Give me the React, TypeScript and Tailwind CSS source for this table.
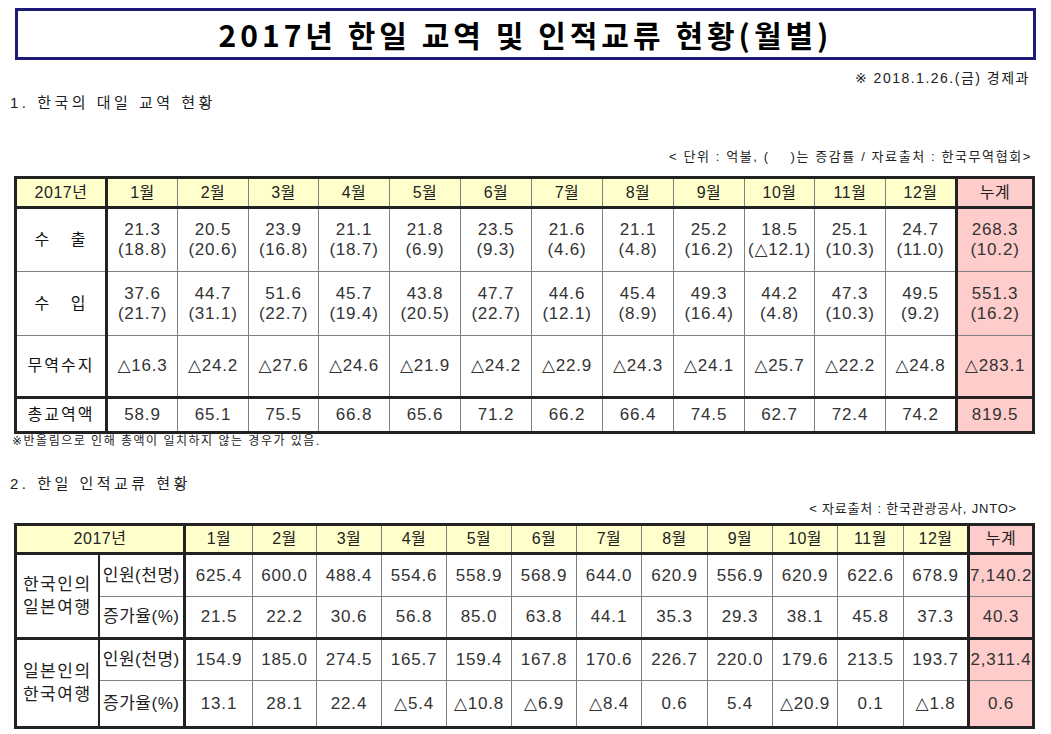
import React from "react";

const tradeMonths = ["1월", "2월", "3월", "4월", "5월", "6월", "7월", "8월", "9월", "10월", "11월", "12월"];

// [value, change]
const exportsRow: [string, string][] = [
  ["21.3", "18.8"], ["20.5", "20.6"], ["23.9", "16.8"], ["21.1", "18.7"],
  ["21.8", "6.9"], ["23.5", "9.3"], ["21.6", "4.6"], ["21.1", "4.8"],
  ["25.2", "16.2"], ["18.5", "△12.1"], ["25.1", "10.3"], ["24.7", "11.0"],
  ["268.3", "10.2"],
];
const importsRow: [string, string][] = [
  ["37.6", "21.7"], ["44.7", "31.1"], ["51.6", "22.7"], ["45.7", "19.4"],
  ["43.8", "20.5"], ["47.7", "22.7"], ["44.6", "12.1"], ["45.4", "8.9"],
  ["49.3", "16.4"], ["44.2", "4.8"], ["47.3", "10.3"], ["49.5", "9.2"],
  ["551.3", "16.2"],
];
const balanceRow = [
  "△16.3", "△24.2", "△27.6", "△24.6", "△21.9", "△24.2", "△22.9",
  "△24.3", "△24.1", "△25.7", "△22.2", "△24.8", "△283.1",
];
const totalRow = [
  "58.9", "65.1", "75.5", "66.8", "65.6", "71.2", "66.2",
  "66.4", "74.5", "62.7", "72.4", "74.2", "819.5",
];

const tradeCols = [91, 71, 71, 70, 71, 71, 71, 71, 71, 71, 70, 71, 71, 77];
const peopleCols = [83, 86, 68, 64, 65, 65, 65, 65, 65, 66, 65, 65, 66, 65, 65];

const peopleGroups = [
  {
    label: ["한국인의", "일본여행"],
    count: ["625.4", "600.0", "488.4", "554.6", "558.9", "568.9", "644.0", "620.9", "556.9", "620.9", "622.6", "678.9", "7,140.2"],
    rate: ["21.5", "22.2", "30.6", "56.8", "85.0", "63.8", "44.1", "35.3", "29.3", "38.1", "45.8", "37.3", "40.3"],
  },
  {
    label: ["일본인의", "한국여행"],
    count: ["154.9", "185.0", "274.5", "165.7", "159.4", "167.8", "170.6", "226.7", "220.0", "179.6", "213.5", "193.7", "2,311.4"],
    rate: ["13.1", "28.1", "22.4", "△5.4", "△10.8", "△6.9", "△8.4", "0.6", "5.4", "△20.9", "0.1", "△1.8", "0.6"],
  },
];

const cell = "border border-[#808080] text-center align-middle p-0";
const num = "text-[17px] text-[#333] tracking-[0.8px] leading-[20px]";
const sum = "bg-[#ffcccc] border-l-[3px] border-l-[#222]";

function TradeTable() {
  const dataRows: { label: string; height: string; thickTop?: boolean; cells: React.ReactNode[] }[] = [
    {
      label: "수   출",
      height: "h-[64px]",
      cells: exportsRow.map(([v, c]) => (
        <>
          <div>{v}</div>
          <div>({c})</div>
        </>
      )),
    },
    {
      label: "수   입",
      height: "h-[64px]",
      cells: importsRow.map(([v, c]) => (
        <>
          <div>{v}</div>
          <div>({c})</div>
        </>
      )),
    },
    { label: "무역수지", height: "h-[62px]", cells: balanceRow },
    { label: "총교역액", height: "h-[35px]", thickTop: true, cells: totalRow },
  ];

  return (
    <table className="ml-[14px] w-[1018px] table-fixed border-collapse border-[3px] border-[#222]">
      <colgroup>
        {tradeCols.map((w, i) => (
          <col key={i} style={{ width: w }} />
        ))}
      </colgroup>
      <thead>
        <tr className="h-[30px] text-[16px] text-[#222] tracking-[0.5px]">
          <th className={`${cell} font-normal bg-[#ffffcc] border-b-[3px] border-b-[#222] border-r-[3px] border-r-[#222]`}>2017년</th>
          {tradeMonths.map((m) => (
            <th key={m} className={`${cell} font-normal bg-[#ffffcc] border-b-[3px] border-b-[#222]`}>
              {m}
            </th>
          ))}
          <th className={`${cell} font-normal border-b-[3px] border-b-[#222] ${sum}`}>누계</th>
        </tr>
      </thead>
      <tbody>
        {dataRows.map((row) => (
          <tr key={row.label} className={row.height}>
            <td
              className={`${cell} border-r-[3px] border-r-[#222] text-[16px] text-[#111] tracking-[2px] whitespace-pre ${
                row.thickTop ? "border-t-[3px] border-t-[#222]" : ""
              }`}
            >
              {row.label}
            </td>
            {row.cells.map((c, i) => (
              <td
                key={i}
                className={`${cell} ${num} ${i === 12 ? sum : ""} ${row.thickTop ? "border-t-[3px] border-t-[#222]" : ""}`}
              >
                {c}
              </td>
            ))}
          </tr>
        ))}
      </tbody>
    </table>
  );
}

function PeopleTable() {
  return (
    <table className="ml-[14px] w-[1018px] table-fixed border-collapse border-[3px] border-[#222]">
      <colgroup>
        {peopleCols.map((w, i) => (
          <col key={i} style={{ width: w }} />
        ))}
      </colgroup>
      <thead>
        <tr className="h-[29px] text-[16px] text-[#222] tracking-[0.5px]">
          <th colSpan={2} className={`${cell} font-normal bg-[#ffffcc] border-b-[3px] border-b-[#222] border-r-[3px] border-r-[#222]`}>
            2017년
          </th>
          {tradeMonths.map((m) => (
            <th key={m} className={`${cell} font-normal bg-[#ffffcc] border-b-[3px] border-b-[#222]`}>
              {m}
            </th>
          ))}
          <th className={`${cell} font-normal border-b-[3px] border-b-[#222] ${sum}`}>누계</th>
        </tr>
      </thead>
      {peopleGroups.map((g, gi) => (
        <tbody key={gi}>
          <tr className={gi === 0 ? "h-[43px]" : "h-[42px]"}>
            <td
              rowSpan={2}
              className={`${cell} border-r-2 border-r-[#222] text-[17px] text-[#222] leading-[23px] tracking-[1.5px] ${
                gi === 1 ? "border-t-[3px] border-t-[#222]" : ""
              }`}
            >
              <div>{g.label[0]}</div>
              <div>{g.label[1]}</div>
            </td>
            <td
              className={`${cell} border-r-[3px] border-r-[#222] text-[17px] text-[#222] tracking-[0.5px] whitespace-nowrap ${
                gi === 1 ? "border-t-[3px] border-t-[#222]" : ""
              }`}
            >
              인원(천명)
            </td>
            {g.count.map((v, i) => (
              <td
                key={i}
                className={`${cell} ${num} ${i === 12 ? sum : ""} ${gi === 1 ? "border-t-[3px] border-t-[#222]" : ""}`}
              >
                {v}
              </td>
            ))}
          </tr>
          <tr className={gi === 0 ? "h-[42px]" : "h-[47px]"}>
            <td className={`${cell} border-r-[3px] border-r-[#222] text-[17px] text-[#222] tracking-[0.5px] whitespace-nowrap`}>
              증가율(%)
            </td>
            {g.rate.map((v, i) => (
              <td key={i} className={`${cell} ${num} ${i === 12 ? sum : ""}`}>
                {v}
              </td>
            ))}
          </tr>
        </tbody>
      ))}
    </table>
  );
}

export default function App() {
  return (
    <div className="w-[1051px] h-[734px] overflow-hidden bg-white text-black font-['Liberation_Sans','DejaVu_Sans','Noto_Sans_CJK_KR',sans-serif]">
      <div className="ml-[15px] mt-[8px] w-[1021px] h-[52px] border-[3px] border-[#1c1c78] flex items-center justify-center">
        <h1 className="text-[30px] font-bold tracking-[4px] font-['Noto_Sans_CJK_KR',sans-serif] leading-none">
          2017년 한일 교역 및 인적교류 현황(월별)
        </h1>
      </div>

      <div className="mt-[8px] h-[20px] pr-[21px] text-right text-[14px] leading-[20px] tracking-[1.5px] text-[#222]">
        ※ 2018.1.26.(금) 경제과
      </div>

      <div className="mt-[5px] h-[20px] pl-[10px] text-[15px] leading-[20px] tracking-[3.5px] text-[#222]">
        1. 한국의 대일 교역 현황
      </div>

      <div className="mt-[35px] h-[18px] pr-[19px] text-right text-[13px] leading-[18px] tracking-[1.6px] text-[#222]">
        &lt; 단위 : 억불, (&nbsp;&nbsp;&nbsp;&nbsp;)는 증감률 / 자료출처 : 한국무역협회&gt;
      </div>

      <div className="mt-[10px]">
        <TradeTable />
      </div>

      <div className="h-[14px] pl-[12px] text-[12px] leading-[14px] tracking-[1.5px] text-[#222]">
        ※반올림으로 인해 총액이 일치하지 않는 경우가 있음.
      </div>

      <div className="mt-[26px] h-[20px] pl-[10px] text-[15px] leading-[20px] tracking-[3.5px] text-[#222]">
        2. 한일 인적교류 현황
      </div>

      <div className="mt-[7px] h-[16px] pr-[34px] text-right text-[13px] leading-[16px] tracking-[0.8px] text-[#222]">
        &lt; 자료출처 : 한국관광공사, JNTO&gt;
      </div>

      <div className="mt-[6px]">
        <PeopleTable />
      </div>
    </div>
  );
}
